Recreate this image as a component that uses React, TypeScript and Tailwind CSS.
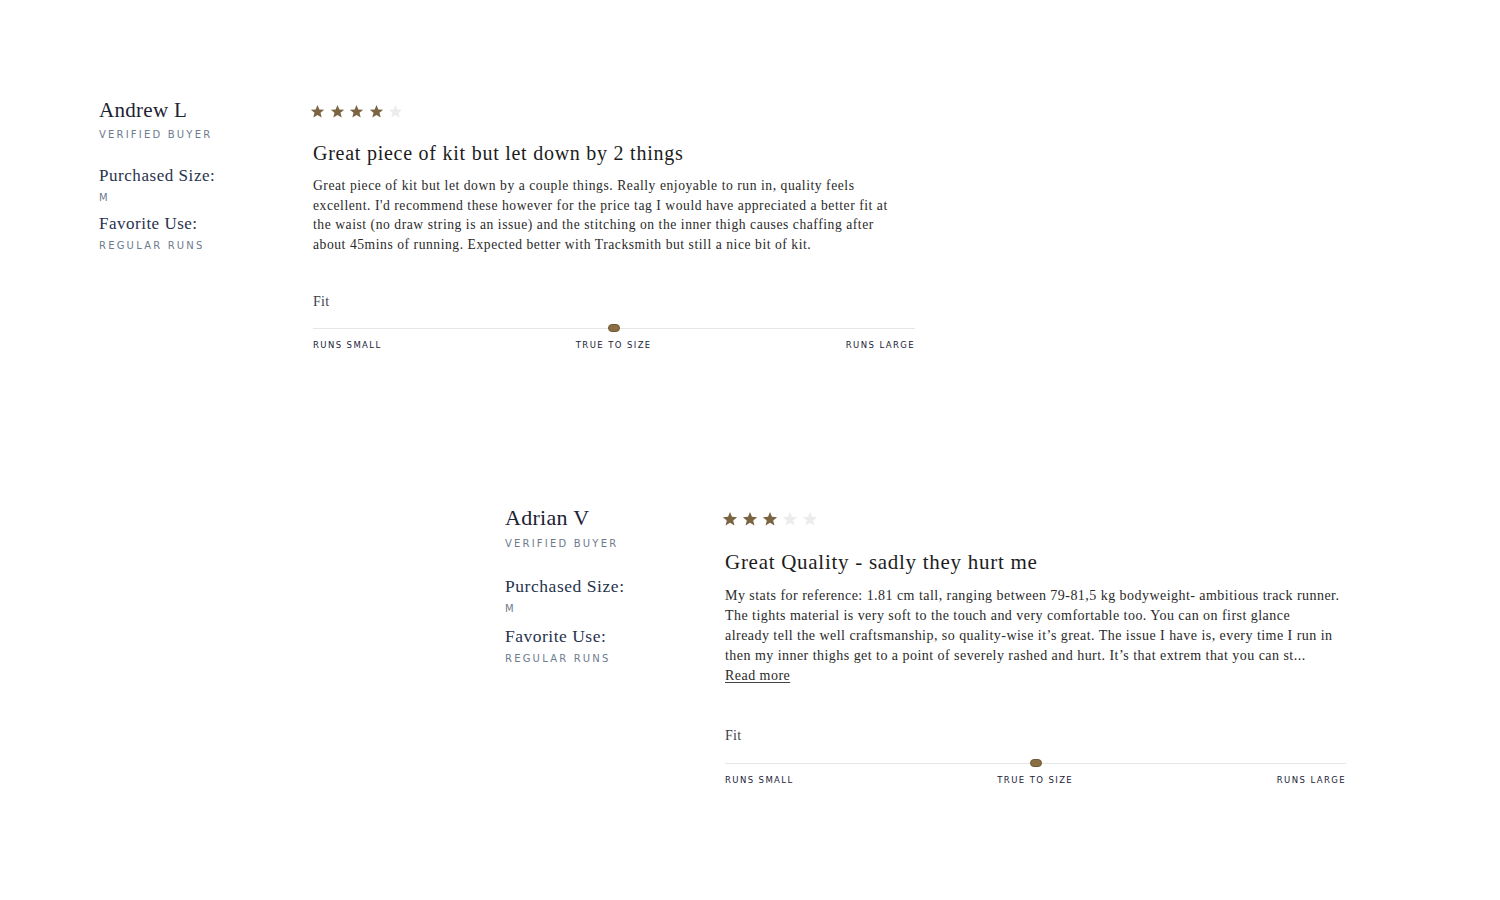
import React from 'react';

interface Review {
  name: string;
  rating: number;
  title: string;
  lines: string[];
  size: string;
  use: string;
  readMore?: boolean;
}

interface Sizes {
  leftW: string;
  contentW: string;
  name: string;
  verified: string;
  purchased: string;
  m: string;
  favorite: string;
  regular: string;
  star: number;
  starGap: string;
  title: string;
  body: string;
  fit: string;
  track: string;
  labels: string;
}

const reviews: Review[] = [
  {
    name: 'Andrew L',
    rating: 4,
    title: 'Great piece of kit but let down by 2 things',
    lines: [
      'Great piece of kit but let down by a couple things. Really enjoyable to run in, quality feels',
      "excellent. I'd recommend these however for the price tag I would have appreciated a better fit at",
      'the waist (no draw string is an issue) and the stitching on the inner thigh causes chaffing after',
      'about 45mins of running. Expected better with Tracksmith but still a nice bit of kit.',
    ],
    size: 'M',
    use: 'Regular Runs',
  },
  {
    name: 'Adrian V',
    rating: 3,
    title: 'Great Quality - sadly they hurt me',
    lines: [
      'My stats for reference: 1.81 cm tall, ranging between 79-81,5 kg bodyweight- ambitious track runner.',
      'The tights material is very soft to the touch and very comfortable too. You can on first glance',
      'already tell the well craftsmanship, so quality-wise it’s great. The issue I have is, every time I run in',
      'then my inner thighs get to a point of severely rashed and hurt. It’s that extrem that you can st...',
    ],
    size: 'M',
    use: 'Regular Runs',
    readMore: true,
  },
];

const small: Sizes = {
  leftW: 'w-[214px]',
  contentW: 'w-[602px]',
  name: 'text-[21px] leading-[24px]',
  verified: 'mt-[6px]',
  purchased: 'mt-[23px] text-[17px] leading-[22px]',
  m: 'mt-[4px]',
  favorite: 'mt-[8px] text-[17px] leading-[22px]',
  regular: 'mt-[4px]',
  star: 15,
  starGap: 'gap-[4.5px]',
  title: 'mt-[16px] text-[20px] leading-[26px] tracking-[0.75px]',
  body: 'mt-[10px] text-[13.6px] leading-[19.5px] tracking-[0.55px]',
  fit: 'mt-[38px]',
  track: 'mt-[12px]',
  labels: 'mt-[7px]',
};

const large: Sizes = {
  leftW: 'w-[220px]',
  contentW: 'w-[621px]',
  name: 'text-[22px] leading-[24px]',
  verified: 'mt-[7px]',
  purchased: 'mt-[24px] text-[17.5px] leading-[22px]',
  m: 'mt-[5px]',
  favorite: 'mt-[9px] text-[17.5px] leading-[22px]',
  regular: 'mt-[5px]',
  star: 16,
  starGap: 'gap-[4px]',
  title: 'mt-[17px] text-[21px] leading-[26px] tracking-[0.72px]',
  body: 'mt-[11px] text-[14px] leading-[20px] tracking-[0.46px]',
  fit: 'mt-[40px]',
  track: 'mt-[13px]',
  labels: 'mt-[7px]',
};

function Star({ filled, size }: { filled: boolean; size: number }) {
  return (
    <svg width={size} height={size} viewBox="0 0 24 24">
      <path
        d="M12 1.5l3 7.1 7.7.6-5.9 4.9 1.9 7.5L12 17.5l-6.7 4.1 1.9-7.5-5.9-4.9 7.7-.6z"
        fill={filled ? '#7b6442' : '#ececec'}
      />
    </svg>
  );
}

function ReviewBlock({ review, s }: { review: Review; s: Sizes }) {
  const sans = 'font-["DejaVu_Sans",sans-serif]';
  return (
    <div className="flex items-start">
      <div className={`${s.leftW} shrink-0 font-["Liberation_Serif",serif]`}>
        <div className={`${s.name} text-[#1b2233] tracking-[0.3px]`}>{review.name}</div>
        <div className={`${s.verified} ${sans} text-[10px] leading-[14px] tracking-[2.2px] text-[#6e7b8e] uppercase`}>
          Verified Buyer
        </div>
        <div className={`${s.purchased} text-[#27324c] tracking-[0.55px]`}>Purchased Size:</div>
        <div className={`${s.m} ${sans} text-[10px] leading-[14px] tracking-[2.2px] text-[#6e7b8e]`}>{review.size}</div>
        <div className={`${s.favorite} text-[#27324c] tracking-[0.5px]`}>Favorite Use:</div>
        <div className={`${s.regular} ${sans} text-[10px] leading-[14px] tracking-[2.2px] text-[#6e7b8e] uppercase`}>
          {review.use}
        </div>
      </div>
      <div className={`${s.contentW} shrink-0 font-["Liberation_Serif",serif]`}>
        <div className={`h-[26px] flex items-center ${s.starGap} -ml-[3px]`}>
          {[1, 2, 3, 4, 5].map((i) => (
            <Star key={i} filled={i <= review.rating} size={s.star} />
          ))}
        </div>
        <h3 className={`${s.title} text-[#1c1c1c]`}>{review.title}</h3>
        <p className={`${s.body} text-[#2a2a2a]`}>
          {review.lines.map((line, i) => (
            <span key={i} className="block whitespace-nowrap">
              {line}
            </span>
          ))}
          {review.readMore && (
            <span className="underline underline-offset-2 decoration-[#444]">Read more</span>
          )}
        </p>
        <div className={`${s.fit} text-[14px] leading-[20px] text-[#3a3f4a] tracking-[0.3px]`}>Fit</div>
        <div className={`${s.track} relative h-[8px] flex items-center`}>
          <div className="w-full h-px bg-[#e6e6e6]" />
          <div className="absolute left-1/2 -translate-x-1/2 w-[12px] h-[8px] rounded-full bg-[#8a6f45] border border-[#6f5836]" />
        </div>
        <div className={`${s.labels} ${sans} flex justify-between text-[8.5px] leading-[12px] tracking-[1.4px] text-[#1a2238] uppercase`}>
          <span>Runs Small</span>
          <span>True to Size</span>
          <span>Runs Large</span>
        </div>
      </div>
    </div>
  );
}

export default function App() {
  return (
    <div className="w-[1500px] h-[900px] bg-white">
      <div className="pt-[98px] pl-[99px]">
        <ReviewBlock review={reviews[0]} s={small} />
      </div>
      <div className="pt-[155px] pl-[505px]">
        <ReviewBlock review={reviews[1]} s={large} />
      </div>
    </div>
  );
}
